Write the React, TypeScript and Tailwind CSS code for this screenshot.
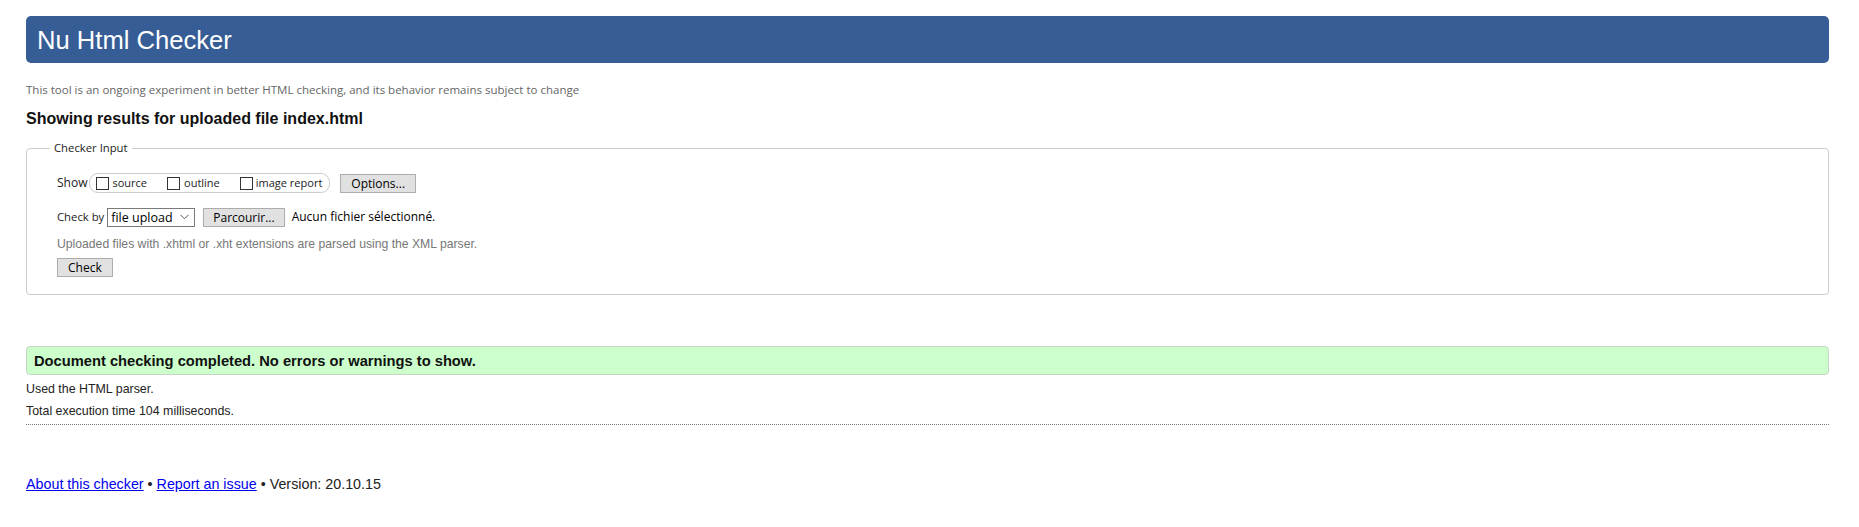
import React from "react";

const arial = { fontFamily: '"Liberation Sans", Arial, sans-serif' };

function Box() {
  return <span className="inline-block w-[13px] h-[13px] border border-[#333] bg-white shrink-0" />;
}

export default function App() {
  return (
    <div className="min-h-[527px] bg-white pl-[26px] pr-[30px] pt-[16px] text-black" style={arial}>
      <div className="h-[47px] rounded-[5px] bg-[#365d95] flex items-center pl-[11px]">
        <h1 className="text-[25.6px] leading-[28px] text-white font-normal">Nu Html Checker</h1>
      </div>

      <p className="mt-[20px] text-[11.5px] leading-[14px] text-[#666]" style={{ fontFamily: '"Open Sans", sans-serif' }}>
        This tool is an ongoing experiment in better HTML checking, and its behavior remains subject to change
      </p>

      <h2 className="mt-[13px] text-[16px] leading-[18px] font-bold text-[#111]">Showing results for uploaded file index.html</h2>

      <fieldset className="mt-[12px] border border-[#ccc] rounded-[4px] pl-[23px] pb-[16px]">
        <legend className="px-[4px] text-[11.3px] leading-[16px] text-[#222]" style={{ fontFamily: '"Open Sans", sans-serif' }}>
          Checker Input
        </legend>
        <div className="pl-[7px]" style={{ fontFamily: '"Open Sans", sans-serif' }}>
          <div className="mt-[17px] h-[20px] flex items-center">
            <span className="text-[12px] text-[#222]">Show</span>
            <div className="ml-[2px] h-[20px] flex items-center border border-[#ccc] rounded-[9px] pl-[6px] pr-[7px] text-[11px] text-[#222]">
              <span className="flex items-center gap-[3px]"><Box /><span>source</span></span>
              <span className="flex items-center gap-[4px] ml-[20px]"><Box /><span>outline</span></span>
              <span className="flex items-center gap-[3px] ml-[20px]"><Box /><span>image report</span></span>
            </div>
            <button className="ml-[10px] h-[19px] px-[10px] bg-[#e1e1e1] border border-[#adadad] text-[12px] leading-[17px] text-black">
              Options...
            </button>
          </div>

          <div className="mt-[14px] h-[20px] flex items-center">
            <span className="text-[11.3px] text-[#222]">Check by</span>
            <div className="ml-[3px] w-[88px] h-[19px] border border-[#7a7a7a] bg-white flex items-center pl-[3px] pr-[4px]">
              <span className="text-[12.5px] leading-[17px] text-black flex-1">file upload</span>
              <svg width="9" height="6" viewBox="0 0 9 6" className="mr-[1px]">
                <path d="M0.5 0.8 L4.5 4.8 L8.5 0.8" fill="none" stroke="#555" strokeWidth="1" />
              </svg>
            </div>
            <button className="ml-[8px] h-[19px] px-[9px] bg-[#e1e1e1] border border-[#adadad] text-[12px] leading-[17px] text-black">
              Parcourir...
            </button>
            <span className="ml-[7px] text-[12px] text-black">Aucun fichier sélectionné.</span>
          </div>

          <p className="mt-[10px] text-[12.2px] leading-[14px] text-[#777]" style={arial}>
            Uploaded files with .xhtml or .xht extensions are parsed using the XML parser.
          </p>

          <button className="mt-[7px] h-[19px] px-[10px] bg-[#e1e1e1] border border-[#adadad] text-[12px] leading-[17px] text-black">
            Check
          </button>
        </div>
      </fieldset>

      <div className="mt-[51px] h-[29px] bg-[#ccffcc] border border-[#c6d6c6] rounded-[4px] flex items-center pl-[7px]">
        <p className="text-[14.7px] leading-[16px] font-bold text-[#111]">
          Document checking completed. No errors or warnings to show.
        </p>
      </div>

      <p className="mt-[7px] text-[12.4px] leading-[14px] text-[#222]">Used the HTML parser.</p>
      <p className="mt-[8px] text-[12.4px] leading-[14px] text-[#222]">Total execution time 104 milliseconds.</p>
      <div className="mt-[6px] border-b border-dotted border-[#777]" />

      <p className="mt-[51px] text-[14.3px] leading-[16px] text-[#222]">
        <a href="#" className="text-[#0000ee] underline">About this checker</a>
        {" • "}
        <a href="#" className="text-[#0000ee] underline">Report an issue</a>
        {" • Version: 20.10.15"}
      </p>
    </div>
  );
}
